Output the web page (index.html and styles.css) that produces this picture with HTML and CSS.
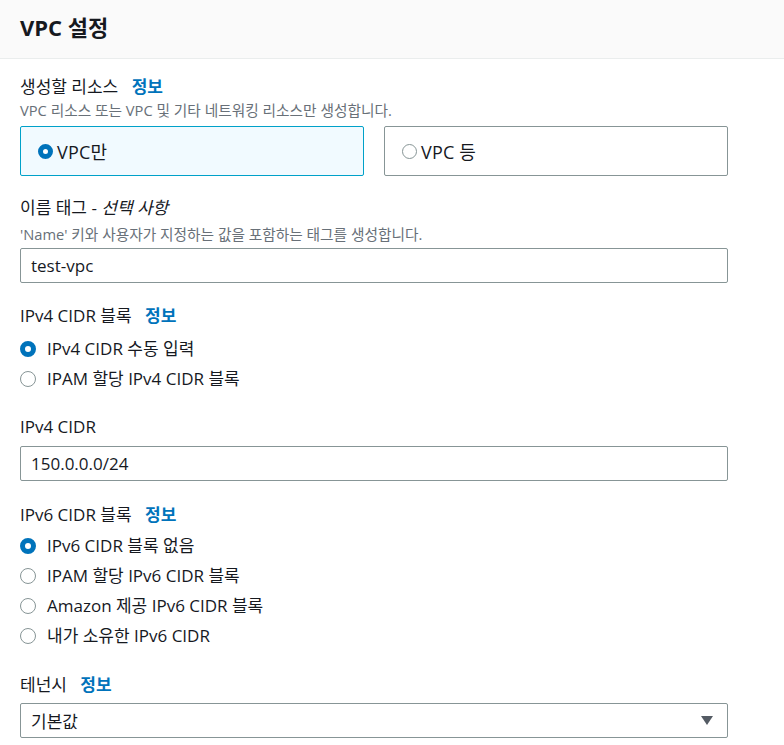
FILE: index.html
```html
<!DOCTYPE html>
<html lang="ko">
<head>
<meta charset="utf-8">
<title>VPC 설정</title>
<link rel="stylesheet" href="styles.css">
</head>
<body>
<div class="header"><h2 class="title">VPC 설정</h2></div>
<div class="content">
  <div class="field f-resource">
    <div class="label">생성할 리소스 <a class="info">정보</a></div>
    <div class="desc">VPC 리소스 또는 VPC 및 기타 네트워킹 리소스만 생성합니다.</div>
    <div class="tiles">
      <div class="tile selected"><span class="radio on"></span><span class="tile-text">VPC만</span></div>
      <div class="tile"><span class="radio"></span><span class="tile-text">VPC 등</span></div>
    </div>
  </div>
  <div class="field f-name">
    <div class="label">이름 태그 - <i>선택 사항</i></div>
    <div class="desc d2">'Name' 키와 사용자가 지정하는 값을 포함하는 태그를 생성합니다.</div>
    <div class="input">test-vpc</div>
  </div>
  <div class="field f-v4">
    <div class="label">IPv4 CIDR 블록 <a class="info">정보</a></div>
    <div class="radios">
      <div class="ritem"><span class="radio on"></span>IPv4 CIDR 수동 입력</div>
      <div class="ritem"><span class="radio"></span>IPAM 할당 IPv4 CIDR 블록</div>
    </div>
  </div>
  <div class="field f-v4cidr">
    <div class="label">IPv4 CIDR</div>
    <div class="input">150.0.0.0/24</div>
  </div>
  <div class="field f-v6">
    <div class="label">IPv6 CIDR 블록 <a class="info">정보</a></div>
    <div class="radios">
      <div class="ritem"><span class="radio on"></span>IPv6 CIDR 블록 없음</div>
      <div class="ritem"><span class="radio"></span>IPAM 할당 IPv6 CIDR 블록</div>
      <div class="ritem"><span class="radio"></span>Amazon 제공 IPv6 CIDR 블록</div>
      <div class="ritem"><span class="radio"></span>내가 소유한 IPv6 CIDR</div>
    </div>
  </div>
  <div class="field f-tenancy">
    <div class="label">테넌시 <a class="info">정보</a></div>
    <div class="input select"><span>기본값</span><span class="caret"></span></div>
  </div>
</div>
</body>
</html>
```

FILE: styles.css
```css
* { box-sizing: border-box; }
body {
  margin: 0;
  background: #ffffff;
  font-family: "Open Sans", "Noto Sans", "Noto Sans CJK KR", sans-serif;
  color: #16191f;
  font-size: 17px;
}
.header {
  height: 59px;
  background: #fafafa;
  border-bottom: 1px solid #eaeded;
  padding: 0 20px 5px;
  display: flex;
  align-items: center;
}
.title {
  margin: 0;
  font-size: 22px;
  font-weight: 700;
  line-height: 30px;
  color: #16191f;
}
.content {
  width: 748px;
  padding: 0 20px;
}
.label {
  line-height: 22px;
  font-size: 17px;
}
.label i { font-style: italic; }
.info {
  color: #0073bb;
  font-weight: 700;
  margin-left: 9px;
}
.desc {
  font-size: 14.7px;
  line-height: 18px;
  color: #687078;
  margin-top: 3px;
}
.f-resource { padding-top: 17px; }
.tiles {
  display: flex;
  gap: 20px;
  margin-top: 7px;
}
.tile {
  flex: 1;
  height: 50px;
  border: 1px solid #879596;
  border-radius: 2px;
  display: flex;
  align-items: center;
  padding-left: 17px;
  gap: 4px;
}
.tile-text { font-size: 18px; letter-spacing: 0.2px; }
.tile .radio { width: 15px; height: 15px; }
.tile.selected {
  background: #f1faff;
  border-color: #00a1c9;
}
.radio {
  width: 16px;
  height: 16px;
  border-radius: 50%;
  border: 1.5px solid #879596;
  background: #fff;
  flex: none;
}
.radio.on {
  border: 5px solid #0073bb;
}
.f-name { margin-top: 21px; }
.d2 { margin-top: 6px; }
.input {
  height: 35px;
  border: 1px solid #879596;
  border-radius: 2px;
  padding: 0 10px;
  display: flex;
  align-items: center;
  margin-top: 5px;
  background: #fff;
}
.f-v4 { margin-top: 22px; }
.radios {
  margin-top: 11px;
  display: flex;
  flex-direction: column;
  gap: 8px;
}
.ritem {
  display: flex;
  align-items: center;
  gap: 11px;
  line-height: 22px;
}
.f-v4cidr { margin-top: 26px; }
.f-v4cidr .input { margin-top: 8px; }
.f-v6 { margin-top: 23px; }
.f-v6 .radios { margin-top: 9px; }
.f-tenancy { margin-top: 27px; }
.f-tenancy .input { margin-top: 7px; }
.select { justify-content: space-between; padding-right: 14px; }
.caret {
  width: 0;
  height: 0;
  border-left: 6.5px solid transparent;
  border-right: 6.5px solid transparent;
  border-top: 9px solid #545b64;
}
```
